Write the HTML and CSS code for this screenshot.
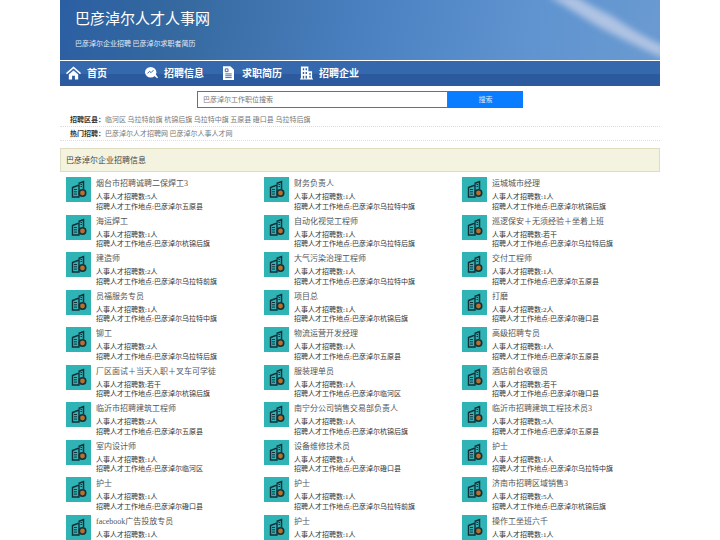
FILE: index.html
```html
<!DOCTYPE html>
<html lang="zh">
<head>
<meta charset="utf-8">
<title>巴彦淖尔人才人事网</title>
<link rel="stylesheet" href="styles.css">
</head>
<body>
<svg class="defs" width="0" height="0" aria-hidden="true">
  <symbol id="job" viewBox="0 0 25 25">
    <rect width="25" height="25" fill="#2fb3b5"/>
    <path d="M6.500 10.500 13 8V20H6.500Z" fill="#2fb3b5" stroke="#12303a" stroke-width="1.400"/>
    <path d="M8 12.500h3M8 14.800h3M8 17.100h3" stroke="#12303a" stroke-width="1"/>
    <path d="M12.500 6.500 17.500 4.500V12" fill="none" stroke="#12303a" stroke-width="1.500"/>
    <path d="M14.500 7.500h1.500M14.500 9.500h1.500" stroke="#12303a" stroke-width="1"/>
    <circle cx="16.500" cy="16" r="3.200" fill="#b8702a" stroke="#12303a" stroke-width="1.600"/>
  </symbol>
</svg>
<div class="page">
  <header class="banner">
    <svg class="sky" viewBox="0 0 600 60" preserveAspectRatio="none" aria-hidden="true">
      <defs><filter id="soft"><feGaussianBlur stdDeviation="3"/></filter></defs>
      <path d="M487 -4C510 8 530 22 545 30 565 40 585 50 604 58V46C580 35 565 25 550 15 535 8 525 2 515 -4Z" fill="#c9d3ea" opacity=".75" filter="url(#soft)"/>
    </svg>
    <h1 class="site-title">巴彦淖尔人才人事网</h1>
    <p class="site-sub">巴彦淖尔企业招聘 巴彦淖尔求职者简历</p>
  </header>
  <nav class="nav">
    <a class="nav-item nav-home">
      <svg class="nav-icon icon-home" viewBox="0 0 16 14"><path d="M8 0 16 7l-1 1.200L8 2.200 1 8.200 0 7Z" fill="#fff"/><path d="M3 8.500 8 4.200l5 4.300V14H9.500V10h-3v4H3Z" fill="#fff"/></svg>
      首页</a>
    <a class="nav-item nav-jobs">
      <svg class="nav-icon icon-jobs" viewBox="0 0 16 15"><ellipse cx="7" cy="6.500" rx="7" ry="6.500" fill="#fff"/><path d="M3 8l2.500-2.500L7.500 7 10.500 4" fill="none" stroke="#2f62a8" stroke-width="1.200"/><path d="M10 10l5 4 1-1-3.500-5Z" fill="#fff"/></svg>
      招聘信息</a>
    <a class="nav-item nav-resume">
      <svg class="nav-icon icon-resume" viewBox="0 0 12 15"><path d="M0 0H8L12 4V15H0Z" fill="#fff"/><path d="M2.500 3h3v3h-3ZM2.500 8.500h7M2.500 10.500h7M2.500 12.500h7" fill="none" stroke="#2f62a8"/></svg>
      求职简历</a>
    <a class="nav-item nav-company">
      <svg class="nav-icon icon-company" viewBox="0 0 14 14"><path d="M1 0H9V5H13V13H14V14H0V13H1Z" fill="#fff"/><path d="M3 2h1.500v2H3ZM6 2h1.500v2H6ZM3 6h1.500v2H3ZM6 6h1.500v2H6ZM3 10h1.500v3H3ZM6 10h1.500v3H6ZM10 7h1.500v2H10ZM10 10h1.500v2H10Z" fill="#2f62a8"/></svg>
      招聘企业</a>
  </nav>
  <form class="search">
    <div class="search-input">巴彦淖尔工作职位搜索</div>
    <div class="search-btn">搜索</div>
  </form>
  <div class="links">
    <p class="link-row"><b>招聘区县：</b>临河区 乌拉特前旗 杭锦后旗 乌拉特中旗 五原县 磴口县 乌拉特后旗</p>
    <p class="link-row"><b>热门招聘：</b>巴彦淖尔人才招聘网 巴彦淖尔人事人才网</p>
  </div>
  <section class="panel">
    <h2 class="panel-head">巴彦淖尔企业招聘信息</h2>
    <div class="grid">
      <div class="job"><svg class="job-icon"><use href="#job"/></svg><div class="job-body"><h3>烟台市招聘诚聘二保焊工3</h3><p>人事人才招聘数:5人</p><p>招聘人才工作地点:巴彦淖尔五原县</p></div></div>
      <div class="job"><svg class="job-icon"><use href="#job"/></svg><div class="job-body"><h3>财务负责人</h3><p>人事人才招聘数:1人</p><p>招聘人才工作地点:巴彦淖尔乌拉特中旗</p></div></div>
      <div class="job"><svg class="job-icon"><use href="#job"/></svg><div class="job-body"><h3>运城城市经理</h3><p>人事人才招聘数:1人</p><p>招聘人才工作地点:巴彦淖尔杭锦后旗</p></div></div>

      <div class="job"><svg class="job-icon"><use href="#job"/></svg><div class="job-body"><h3>海运焊工</h3><p>人事人才招聘数:1人</p><p>招聘人才工作地点:巴彦淖尔杭锦后旗</p></div></div>
      <div class="job"><svg class="job-icon"><use href="#job"/></svg><div class="job-body"><h3>自动化视觉工程师</h3><p>人事人才招聘数:1人</p><p>招聘人才工作地点:巴彦淖尔乌拉特后旗</p></div></div>
      <div class="job"><svg class="job-icon"><use href="#job"/></svg><div class="job-body"><h3>巡逻保安＋无须经验＋坐着上班</h3><p>人事人才招聘数:若干</p><p>招聘人才工作地点:巴彦淖尔乌拉特后旗</p></div></div>

      <div class="job"><svg class="job-icon"><use href="#job"/></svg><div class="job-body"><h3>建造师</h3><p>人事人才招聘数:2人</p><p>招聘人才工作地点:巴彦淖尔乌拉特前旗</p></div></div>
      <div class="job"><svg class="job-icon"><use href="#job"/></svg><div class="job-body"><h3>大气污染治理工程师</h3><p>人事人才招聘数:1人</p><p>招聘人才工作地点:巴彦淖尔乌拉特中旗</p></div></div>
      <div class="job"><svg class="job-icon"><use href="#job"/></svg><div class="job-body"><h3>交付工程师</h3><p>人事人才招聘数:1人</p><p>招聘人才工作地点:巴彦淖尔五原县</p></div></div>

      <div class="job"><svg class="job-icon"><use href="#job"/></svg><div class="job-body"><h3>员福服务专员</h3><p>人事人才招聘数:1人</p><p>招聘人才工作地点:巴彦淖尔乌拉特中旗</p></div></div>
      <div class="job"><svg class="job-icon"><use href="#job"/></svg><div class="job-body"><h3>项目总</h3><p>人事人才招聘数:1人</p><p>招聘人才工作地点:巴彦淖尔杭锦后旗</p></div></div>
      <div class="job"><svg class="job-icon"><use href="#job"/></svg><div class="job-body"><h3>打磨</h3><p>人事人才招聘数:2人</p><p>招聘人才工作地点:巴彦淖尔磴口县</p></div></div>

      <div class="job"><svg class="job-icon"><use href="#job"/></svg><div class="job-body"><h3>铆工</h3><p>人事人才招聘数:2人</p><p>招聘人才工作地点:巴彦淖尔乌拉特后旗</p></div></div>
      <div class="job"><svg class="job-icon"><use href="#job"/></svg><div class="job-body"><h3>物流运营开发经理</h3><p>人事人才招聘数:1人</p><p>招聘人才工作地点:巴彦淖尔五原县</p></div></div>
      <div class="job"><svg class="job-icon"><use href="#job"/></svg><div class="job-body"><h3>高级招聘专员</h3><p>人事人才招聘数:1人</p><p>招聘人才工作地点:巴彦淖尔五原县</p></div></div>

      <div class="job"><svg class="job-icon"><use href="#job"/></svg><div class="job-body"><h3>厂区面试＋当天入职＋叉车可学徒</h3><p>人事人才招聘数:若干</p><p>招聘人才工作地点:巴彦淖尔杭锦后旗</p></div></div>
      <div class="job"><svg class="job-icon"><use href="#job"/></svg><div class="job-body"><h3>服装理单员</h3><p>人事人才招聘数:1人</p><p>招聘人才工作地点:巴彦淖尔临河区</p></div></div>
      <div class="job"><svg class="job-icon"><use href="#job"/></svg><div class="job-body"><h3>酒店前台收银员</h3><p>人事人才招聘数:若干</p><p>招聘人才工作地点:巴彦淖尔磴口县</p></div></div>

      <div class="job"><svg class="job-icon"><use href="#job"/></svg><div class="job-body"><h3>临沂市招聘建筑工程师</h3><p>人事人才招聘数:2人</p><p>招聘人才工作地点:巴彦淖尔五原县</p></div></div>
      <div class="job"><svg class="job-icon"><use href="#job"/></svg><div class="job-body"><h3>南宁分公司销售交易部负责人</h3><p>人事人才招聘数:1人</p><p>招聘人才工作地点:巴彦淖尔杭锦后旗</p></div></div>
      <div class="job"><svg class="job-icon"><use href="#job"/></svg><div class="job-body"><h3>临沂市招聘建筑工程技术员3</h3><p>人事人才招聘数:5人</p><p>招聘人才工作地点:巴彦淖尔五原县</p></div></div>

      <div class="job"><svg class="job-icon"><use href="#job"/></svg><div class="job-body"><h3>室内设计师</h3><p>人事人才招聘数:1人</p><p>招聘人才工作地点:巴彦淖尔临河区</p></div></div>
      <div class="job"><svg class="job-icon"><use href="#job"/></svg><div class="job-body"><h3>设备维修技术员</h3><p>人事人才招聘数:1人</p><p>招聘人才工作地点:巴彦淖尔磴口县</p></div></div>
      <div class="job"><svg class="job-icon"><use href="#job"/></svg><div class="job-body"><h3>护士</h3><p>人事人才招聘数:1人</p><p>招聘人才工作地点:巴彦淖尔乌拉特中旗</p></div></div>

      <div class="job"><svg class="job-icon"><use href="#job"/></svg><div class="job-body"><h3>护士</h3><p>人事人才招聘数:1人</p><p>招聘人才工作地点:巴彦淖尔磴口县</p></div></div>
      <div class="job"><svg class="job-icon"><use href="#job"/></svg><div class="job-body"><h3>护士</h3><p>人事人才招聘数:1人</p><p>招聘人才工作地点:巴彦淖尔乌拉特前旗</p></div></div>
      <div class="job"><svg class="job-icon"><use href="#job"/></svg><div class="job-body"><h3>济南市招聘区域销售3</h3><p>人事人才招聘数:5人</p><p>招聘人才工作地点:巴彦淖尔杭锦后旗</p></div></div>

      <div class="job"><svg class="job-icon"><use href="#job"/></svg><div class="job-body"><h3>facebook广告投放专员</h3><p>人事人才招聘数:1人</p></div></div>
      <div class="job"><svg class="job-icon"><use href="#job"/></svg><div class="job-body"><h3>护士</h3><p>人事人才招聘数:1人</p></div></div>
      <div class="job"><svg class="job-icon"><use href="#job"/></svg><div class="job-body"><h3>操作工坐班六千</h3><p>人事人才招聘数:1人</p></div></div>
    </div>
  </section>
</div>
</body>
</html>
```
FILE: styles.css
```css
* { box-sizing: border-box; }
html, body { margin: 0; padding: 0; height: 540px; overflow: hidden; background: #fff; }
body { font-family: "Liberation Serif", "Noto Sans CJK SC", serif; color: #444; }
.defs { position: absolute; }
.page { width: 600px; margin: 0 auto; }
.banner {
  position: relative;
  height: 60px;
  padding: 9px 15px 0;
  overflow: hidden;
  background: linear-gradient(100deg, #2b5fa3 0%, #35699f 20%, #4a80c0 50%, #5f94d0 78%, #6a9ad0 100%);
}
.sky { position: absolute; inset: 0; width: 100%; height: 100%; }
.site-title {
  position: relative;
  margin: 0;
  font: 400 15px/18px "Noto Sans CJK SC", "Liberation Sans", sans-serif;
  color: #fff;
}
.site-sub {
  position: relative;
  margin: 11px 0 0;
  font: 400 7px/10px "Noto Sans CJK SC", sans-serif;
  color: #e4ecf7;
}
.nav {
  display: flex;
  align-items: center;
  height: 26px;
  margin-bottom: 5px;
  padding-bottom: 1px;
  border-top: 1px solid #fff;
  background: linear-gradient(#3568ac 0%, #3568ac 50%, #2b5a9f 50%, #2b5a9f 100%);
}
.nav-item {
  display: flex;
  align-items: center;
  font: 700 10px/14px "Noto Sans CJK SC", sans-serif;
  color: #fff;
}
.nav-home { width: 85px; padding-left: 6px; gap: 6px; }
.nav-jobs { width: 78px; gap: 6px; }
.nav-resume { width: 77px; gap: 8px; }
.nav-company { gap: 6px; }
.nav-icon { flex: none; height: 14px; }
.icon-home { width: 15px; }
.icon-jobs { width: 13px; }
.icon-resume { width: 11px; }
.icon-company { width: 13px; }
.search { display: flex; width: 326px; height: 17px; margin: 0 0 0 137px; }
.search-input {
  width: 251px;
  padding-left: 5px;
  border: 1px solid #1e80f0;
  font: 400 7px/15px "Noto Sans CJK SC", sans-serif;
  color: #777;
}
.search-btn {
  width: 75px;
  background: #0a7cff;
  color: #dbe9fb;
  text-align: center;
  font: 400 7px/17px "Noto Sans CJK SC", sans-serif;
}
.links { margin-top: 5px; padding-bottom: 7px; }
.link-row {
  margin: 0;
  height: 14px;
  padding-left: 10px;
  border-bottom: 1px dotted #ddd;
  font: 400 7px/12px "Noto Sans CJK SC", sans-serif;
  color: #777;
}
.link-row b { font-weight: 700; color: #333; }
.panel-head {
  margin: 0;
  height: 24px;
  padding-left: 5px;
  border: 1px solid #e0dcc0;
  background: #f4f3e0;
  font: 400 8px/21px "Noto Sans CJK SC", sans-serif;
  color: #444;
}
.grid { display: grid; grid-template-columns: repeat(3, 198px); grid-auto-rows: 37.5px; padding: 5px 0 0 6px; }
.job { display: flex; gap: 5px; }
.job-icon { width: 25px; height: 25px; flex: none; }
.job-body { min-width: 0; padding-top: 1px; white-space: nowrap; }
.job-body h3 { margin: 0 0 3px; font-weight: 400; font-size: 8px; line-height: 12px; color: #555; }
.job-body p { margin: 0; font-size: 7px; line-height: 9.500px; color: #333; }
```
